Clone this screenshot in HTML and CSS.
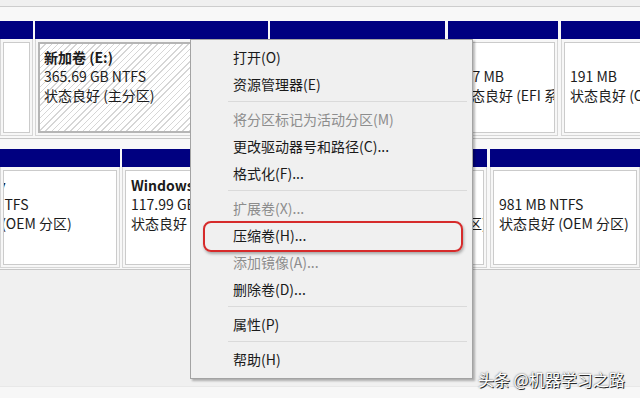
FILE: index.html
```html
<!DOCTYPE html>
<html lang="zh-CN">
<head>
  <meta charset="UTF-8" />
  <title>磁盘管理</title>
  <link rel="stylesheet" href="styles.css">
</head>
<body>
  <div class="screen">
    <div class="topbar"></div>

    <div class="disk disk-one">
      <div class="part" style="width:33px">
        <div class="bar"></div>
        <div class="box"><div class="cell"></div></div>
      </div>
      <div class="part" style="width:233px">
        <div class="bar"></div>
        <div class="box">
          <div class="cell sel">
            <b>新加卷 (E:)</b><br>365.69 GB NTFS<br>状态良好 (主分区)
          </div>
        </div>
      </div>
      <div class="part" style="width:175px">
        <div class="bar"></div>
        <div class="box"><div class="cell"><br>16 MB<br>状态良好 (Microsoft 保留分区)</div></div>
      </div>
      <div class="part part-gap" style="width:110px">
        <div class="bar"></div>
        <div class="box"><div class="cell"><br>277 MB<br>状态良好 (EFI 系统分区)</div></div>
      </div>
      <div class="part part-gap" style="width:90px">
        <div class="bar"></div>
        <div class="box"><div class="cell"><br>191 MB<br>状态良好 (OEM 分区)</div></div>
      </div>
    </div>

    <div class="disk disk-two">
      <div class="part" style="width:120px">
        <div class="bar"></div>
        <div class="box"><div class="cell clip"><div class="shift"><b>Recovery</b><br>1.00 GB NTFS<br>状态良好 (OEM 分区)</div></div></div>
      </div>
      <div class="part" style="width:224px">
        <div class="bar"></div>
        <div class="box"><div class="cell"><b>Windows (C:)</b><br>117.99 GB NTFS<br>状态良好 (启动, 页面文件, 故障转储, 基本数据分区)</div></div>
      </div>
      <div class="part" style="width:139px">
        <div class="bar"></div>
        <div class="box"><div class="cell"><br>850 MB NTFS<br>状态良好 (OEM 分区)</div></div>
      </div>
      <div class="part part-gap" style="width:150px">
        <div class="bar"></div>
        <div class="box"><div class="cell"><br>981 MB NTFS<br>状态良好 (OEM 分区)</div></div>
      </div>
    </div>

    <div class="bottom"></div>

    <div class="menu">
      <div class="item">打开(O)</div>
      <div class="item">资源管理器(E)</div>
      <div class="sep"></div>
      <div class="item off">将分区标记为活动分区(M)</div>
      <div class="item">更改驱动器号和路径(C)...</div>
      <div class="item">格式化(F)...</div>
      <div class="sep"></div>
      <div class="item off">扩展卷(X)...</div>
      <div class="item">压缩卷(H)...</div>
      <div class="item off">添加镜像(A)...</div>
      <div class="item">删除卷(D)...</div>
      <div class="sep"></div>
      <div class="item">属性(P)</div>
      <div class="sep"></div>
      <div class="item">帮助(H)</div>
    </div>

    <div class="mark"></div>
    <div class="watermark">头条 @机器学习之路</div>
  </div>
</body>
</html>
```

FILE: styles.css
```css
* {
  box-sizing: border-box;
  margin: 0;
  padding: 0;
}

body {
  background: #f0f0f0;
}

.screen {
  position: relative;
  width: 640px;
  height: 398px;
  overflow: hidden;
  background: #f0f0f0;
  font-family: "Noto Sans CJK SC", "Noto Sans", sans-serif;
  font-size: 14px;
  color: #1b1b1b;
}

.topbar {
  height: 7px;
  border-bottom: 1px solid #cdcdcd;
}

.disk {
  display: flex;
  gap: 2px;
  background: #f8f8f8;
  border-bottom: 1px solid #c6c6c6;
}

.disk-one {
  height: 132px;
  padding: 14px 0 2px;
}

.disk-two {
  height: 131px;
  padding: 10px 0 1px;
}

.part {
  display: flex;
  flex-direction: column;
  flex: none;
}

.part-gap {
  margin-left: 1px;
}

.bar {
  height: 18px;
  background: #000080;
}

.box {
  flex: 1;
  border: 1px solid #d6d6d6;
  border-top: none;
  padding: 3px 2px 2px;
  background: #f7f7f7;
  overflow: hidden;
}

.cell {
  height: 100%;
  border: 1px solid #cbcbcb;
  background: #fff;
  padding: 5px 0 0 5px;
  line-height: 19px;
  white-space: nowrap;
  overflow: hidden;
}

.cell b {
  font-weight: 600;
}

.cell.sel {
  border: 2px solid #b5b5b5;
  padding: 4px 0 0 4px;
  background: repeating-linear-gradient(135deg, #ffffff 0 3.4px, #d6d6d6 3.4px 4.4px);
}

.cell.clip {
  padding-left: 0;
}

.shift {
  margin-left: -62px;
}

.bottom {
  position: absolute;
  left: 0;
  right: 0;
  bottom: 0;
  height: 12px;
  background: #f7f7f7;
  border-top: 1px solid #e8e8e8;
}

.menu {
  position: absolute;
  left: 190px;
  top: 39px;
  width: 283px;
  height: 340px;
  padding: 4px 2px 3px;
  background: #f0f0f0;
  border: 1px solid #a3a3a3;
  box-shadow: 2px 2px 2px rgba(0, 0, 0, 0.28);
}

.item {
  height: 27px;
  line-height: 26px;
  padding-left: 40px;
  color: #1a1a1a;
  white-space: nowrap;
}

.item.off {
  color: #8d8d8d;
}

.sep {
  height: 1px;
  margin: 3px 3px 4px 35px;
  background: #dadada;
}

.mark {
  position: absolute;
  left: 203px;
  top: 221px;
  width: 260px;
  height: 31px;
  border: 2px solid #d62b2b;
  border-radius: 8px;
  box-shadow: 1px 2px 3px rgba(0, 0, 0, 0.3);
}

.watermark {
  position: absolute;
  left: 478px;
  top: 368px;
  font-size: 16px;
  line-height: 22px;
  color: #fff;
  white-space: nowrap;
  text-shadow: 1px 1px 0 #2a2a2a, 0 0 2px #444;
}
```
